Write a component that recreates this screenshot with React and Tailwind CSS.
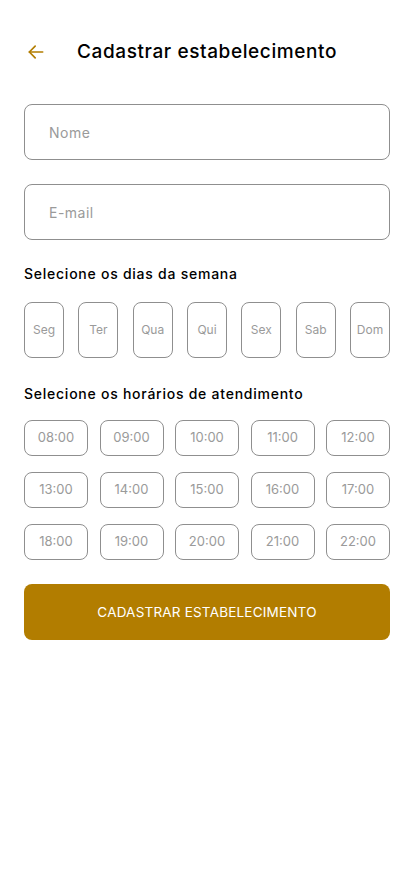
import { useState } from 'react';

const days = ['Seg', 'Ter', 'Qua', 'Qui', 'Sex', 'Sab', 'Dom'];
const hours = [
  ['08:00', '09:00', '10:00', '11:00', '12:00'],
  ['13:00', '14:00', '15:00', '16:00', '17:00'],
  ['18:00', '19:00', '20:00', '21:00', '22:00'],
];

function BackArrow() {
  return (
    <svg width="20" height="20" viewBox="0 0 24 24" fill="none" stroke="#b27d00" strokeWidth="2" strokeLinecap="round" strokeLinejoin="round">
      <path d="M20 12H4" />
      <path d="M11 5l-7 7 7 7" />
    </svg>
  );
}

export default function App() {
  const [nome, setNome] = useState('');
  const [email, setEmail] = useState('');

  return (
    <div className="min-h-[896px] bg-white px-6 text-black" style={{ fontFamily: 'Inter, "Open Sans", sans-serif' }}>
      <div className="flex items-center h-[104px]">
        <button className="w-5 h-5 ml-[2px] flex items-center justify-center">
          <BackArrow />
        </button>
        <h1 className="ml-[31px] text-[19px] font-medium tracking-[0.6px]">Cadastrar estabelecimento</h1>
      </div>

      <div className="flex flex-col gap-6">
        <input
          value={nome}
          onChange={(e) => setNome(e.target.value)}
          placeholder="Nome"
          className="h-14 w-full rounded-lg border border-[#8f8f8f] px-6 text-sm tracking-[0.5px] placeholder:text-[#9a9a9a] outline-none"
        />
        <input
          value={email}
          onChange={(e) => setEmail(e.target.value)}
          placeholder="E-mail"
          className="h-14 w-full rounded-lg border border-[#8f8f8f] px-6 text-sm tracking-[0.5px] placeholder:text-[#9a9a9a] outline-none"
        />
      </div>

      <div className="mt-6 text-sm font-medium leading-5 tracking-[0.75px]">Selecione os dias da semana</div>
      <div className="mt-[18px] flex justify-between">
        {days.map((d) => (
          <button key={d} className="w-10 h-14 rounded-lg border border-[#8f8f8f] text-xs text-[#9a9a9a] flex items-center justify-center">
            {d}
          </button>
        ))}
      </div>

      <div className="mt-[26px] text-sm font-medium leading-5 tracking-[0.75px]">Selecione os horários de atendimento</div>
      <div className="mt-4 flex flex-col gap-4">
        {hours.map((row, i) => (
          <div key={i} className="flex justify-between">
            {row.map((h) => (
              <button key={h} className="w-16 h-9 rounded-lg border border-[#8f8f8f] text-[13px] text-[#9a9a9a] flex items-center justify-center">
                {h}
              </button>
            ))}
          </div>
        ))}
      </div>

      <button className="mt-6 h-14 w-full rounded-lg bg-[#b27d00] text-white text-[13.5px] font-normal tracking-[0.2px] uppercase">
        Cadastrar estabelecimento
      </button>
    </div>
  );
}
